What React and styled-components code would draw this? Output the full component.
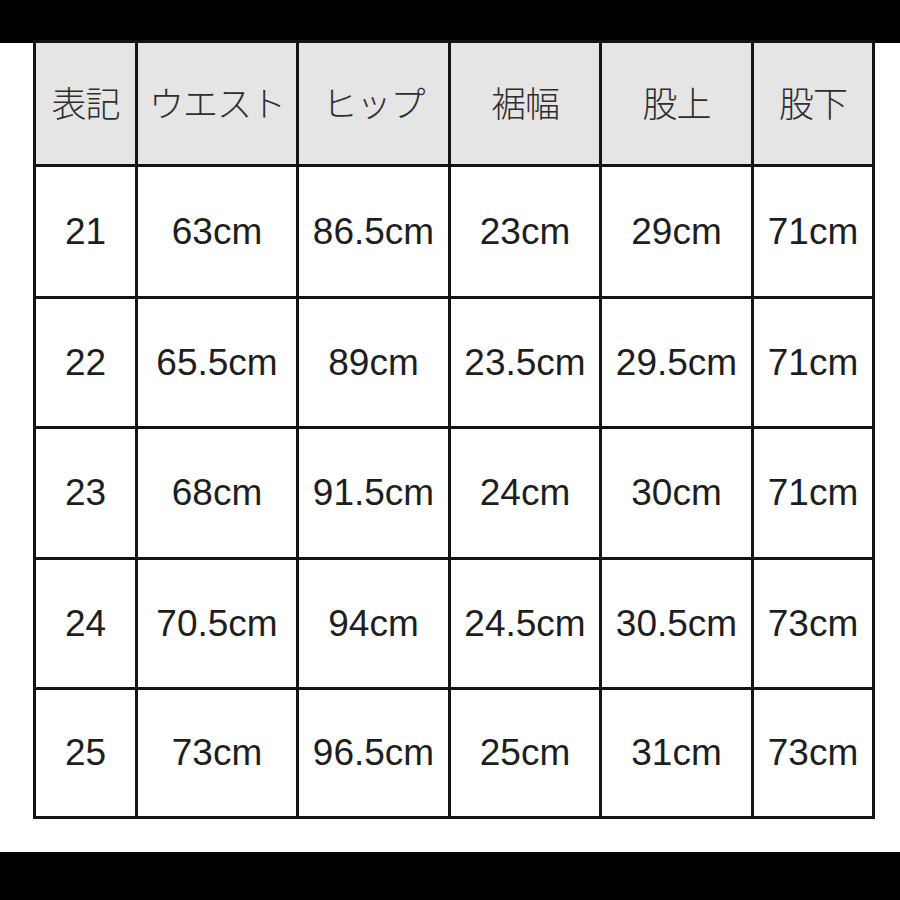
import React from 'react';
import styled, { createGlobalStyle } from 'styled-components';

const GlobalStyle = createGlobalStyle`
  html, body {
    margin: 0;
    padding: 0;
    background: #ffffff;
  }
  body {
    font-family: "Liberation Sans", Arial, sans-serif;
  }
`;

const Page = styled.div`
  width: 900px;
  height: 900px;
  display: flex;
  flex-direction: column;
  background: #fff;
  overflow: hidden;
`;

const Bar = styled.div`
  height: ${({ h }) => h}px;
  background: #000;
  flex-shrink: 0;
`;

const TableWrap = styled.div`
  padding: 0 0 0 33px;
  height: 779px;
  margin-top: -3px;
`;

const Table = styled.div`
  width: 842px;
  height: 779px;
  box-sizing: border-box;
  display: grid;
  grid-template-columns: 99px 158px 149px 148px 149px 118px;
  grid-template-rows: 121px 129px 127px 128px 127px 126px;
  gap: 3px;
  padding: 3px;
  background: #141414;
`;

const Cell = styled.div`
  display: flex;
  align-items: center;
  justify-content: center;
  background: ${({ head }) => (head ? '#e5e5e5' : '#ffffff')};
  color: ${({ head }) => (head ? '#2e2e2e' : '#1e1e1e')};
  font-family: ${({ head }) =>
    head
      ? '"Noto Sans CJK JP", "Noto Sans", sans-serif'
      : '"Liberation Sans", Arial, sans-serif'};
  font-size: ${({ head }) => (head ? '35px' : '37px')};
  font-weight: ${({ head }) => (head ? 300 : 400)};
  letter-spacing: ${({ head }) => (head ? '-1px' : '0')};
  padding-bottom: ${({ head }) => (head ? '4px' : '0')};
  white-space: nowrap;
`;

const Spacer = styled.div`
  flex: 1;
`;

const headers = ['表記', 'ウエスト', 'ヒップ', '裾幅', '股上', '股下'];

const rows = [
  ['21', '63cm', '86.5cm', '23cm', '29cm', '71cm'],
  ['22', '65.5cm', '89cm', '23.5cm', '29.5cm', '71cm'],
  ['23', '68cm', '91.5cm', '24cm', '30cm', '71cm'],
  ['24', '70.5cm', '94cm', '24.5cm', '30.5cm', '73cm'],
  ['25', '73cm', '96.5cm', '25cm', '31cm', '73cm'],
];

export default function App() {
  return (
    <Page>
      <GlobalStyle />
      <Bar h={43} />
      <TableWrap>
        <Table>
          {headers.map((h) => (
            <Cell head key={h}>{h}</Cell>
          ))}
          {rows.map((r, i) =>
            r.map((v, j) => <Cell key={i + '-' + j}>{v}</Cell>)
          )}
        </Table>
      </TableWrap>
      <Spacer />
      <Bar h={48} />
    </Page>
  );
}
